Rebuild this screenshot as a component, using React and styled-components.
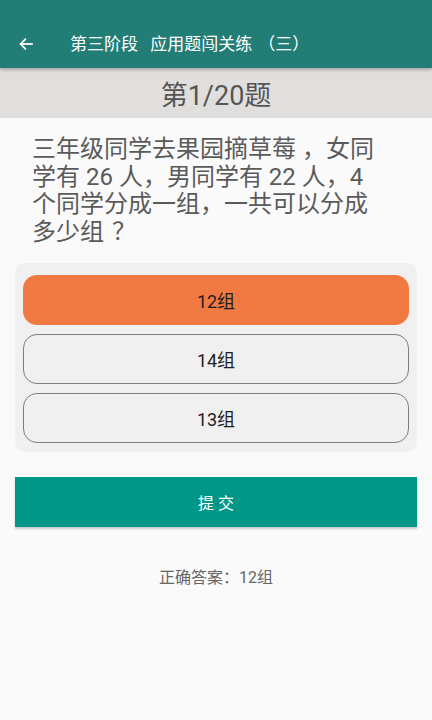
import React from 'react';
import styled, { createGlobalStyle } from 'styled-components';

const GlobalStyle = createGlobalStyle`
  html, body {
    margin: 0;
    padding: 0;
    background: #FAFAFA;
  }
  body {
    font-family: 'Roboto', 'Noto Sans CJK SC', sans-serif;
  }
`;

const Page = styled.div`
  display: flex;
  flex-direction: column;
  width: 432px;
  min-height: 720px;
  background: #FAFAFA;
  box-sizing: border-box;
`;

const Toolbar = styled.div`
  position: relative;
  z-index: 1;
  height: 68px;
  background-color: #237D77;
  display: flex;
  align-items: flex-end;
  padding: 0 0 12px 17px;
  box-sizing: border-box;
  box-shadow: 0 2px 3px rgba(0, 0, 0, 0.25);
`;

const BackButton = styled.div`
  width: 18px;
  height: 24px;
  display: flex;
  align-items: center;
  justify-content: center;
  margin-right: 35px;
`;

const ToolbarTitle = styled.span`
  font-size: 17px;
  color: #FFFFFF;
  line-height: 24px;
  word-spacing: 8px;
`;

const Punct = styled.span`
  margin-left: ${p => p.$gap || 0}px;
`;

const Counter = styled.div`
  height: 50px;
  background-color: #E0DFDE;
  display: flex;
  align-items: center;
  justify-content: center;
  font-size: 27px;
  color: #555555;
`;

const Question = styled.div`
  margin: 18px 0 0 32px;
  width: 348px;
  font-size: 24px;
  line-height: 27.5px;
  color: #5A5A5A;
`;

const OptionPanel = styled.div`
  margin: 17px 15px 0 15px;
  padding: 12px 8px 9px 8px;
  background-color: #F0F0F0;
  border-radius: 10px;
  display: flex;
  flex-direction: column;
  gap: 9px;
`;

const Option = styled.div`
  height: 50px;
  border-radius: 14px;
  box-sizing: border-box;
  display: flex;
  align-items: center;
  justify-content: center;
  font-size: 18px;
  color: #1E1E1E;
  background-color: ${p => (p.$selected ? '#F07A42' : 'transparent')};
  border: ${p => (p.$selected ? 'none' : '1.5px solid #7E7E7E')};
`;

const SubmitButton = styled.div`
  margin: 25px 15px 0 15px;
  height: 50px;
  background-color: #009688;
  display: flex;
  align-items: center;
  justify-content: center;
  font-size: 16px;
  color: #FFFFFF;
  white-space: pre;
  box-shadow: 0 2px 2px rgba(0, 0, 0, 0.2);
`;

const Answer = styled.div`
  margin-top: 41px;
  text-align: center;
  font-size: 16px;
  line-height: 20px;
  color: #666666;
`;

const options = [
  { label: '12组', selected: true },
  { label: '14组', selected: false },
  { label: '13组', selected: false },
];

const App = () => {
  return (
    <>
      <GlobalStyle />
      <Page lang="zh-CN">
        <Toolbar>
          <BackButton>
            <svg width="16" height="16" viewBox="0 0 24 24" fill="none" stroke="#FFFFFF" strokeWidth="2.6" strokeLinecap="square">
              <path d="M21 12H4" />
              <path d="M11 5l-7 7 7 7" />
            </svg>
          </BackButton>
          <ToolbarTitle>第三阶段 应用题闯关练<Punct $gap={6}>（</Punct>三）</ToolbarTitle>
        </Toolbar>
        <Counter>第1/20题</Counter>
        <Question>
          三年级同学去果园摘草莓 ，女同学有 26 人，男同学有 22 人，4 个同学分成一组，一共可以分成多少组<Punct $gap={8}>？</Punct>
        </Question>
        <OptionPanel>
          {options.map(o => (
            <Option key={o.label} $selected={o.selected}>{o.label}</Option>
          ))}
        </OptionPanel>
        <SubmitButton>提 交</SubmitButton>
        <Answer>正确答案：12组</Answer>
      </Page>
    </>
  );
};

export default App;
